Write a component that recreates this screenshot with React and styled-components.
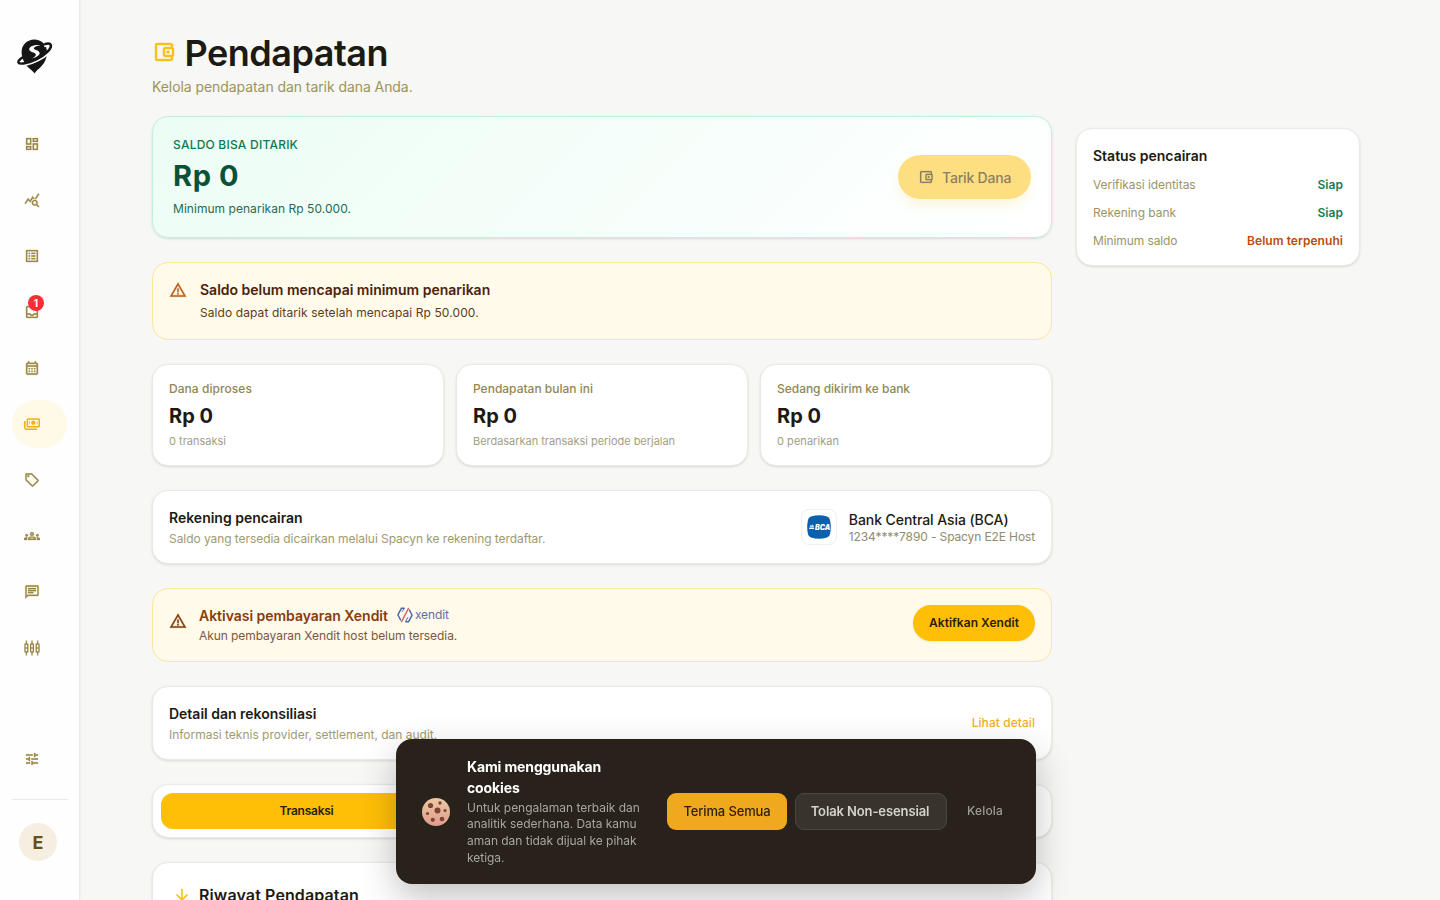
import React from "react";
import styled, { createGlobalStyle, css } from "styled-components";
import {
  MdOutlineDashboard,
  MdQueryStats,
  MdOutlineListAlt,
  MdOutlineInbox,
  MdOutlineCalendarMonth,
  MdOutlineSell,
  MdOutlineGroups,
  MdOutlineChat,
  MdTune,
  MdOutlineAccountBalanceWallet,
  MdWarningAmber,
  MdArrowDownward,
} from "react-icons/md";

const GlobalStyle = createGlobalStyle`
  *, *::before, *::after { box-sizing: border-box; }
  body {
    margin: 0;
    height: 900px;
    overflow: hidden;
    background: #f7f7f5;
    color: #1c1a12;
    font-family: Inter, "Open Sans", sans-serif;
  }
  h1, h2, h3, p { margin: 0; }
  button { font-family: inherit; border: 0; padding: 0; }
  /* Material icons carry an invisible 24px bounds shape that must not be stroked */
  svg path[fill="none"][d^="M0 0h24"],
  svg path[fill="none"][d^="M0,0h24"],
  svg rect[fill="none"][height="24"] { stroke: none; }
`;

const Shell = styled.div`
  display: flex;
  height: 900px;
  overflow: hidden;
`;

/* Sidebar */
const Sidebar = styled.aside`
  flex: none;
  display: flex;
  flex-direction: column;
  width: 80px;
  height: 900px;
  padding: 38px 12px 0;
  background: #fefefe;
  border-right: 1px solid #ebebe9;
  box-shadow: 1px 0 3px rgba(0, 0, 0, 0.04);
`;
const Brand = styled.a`
  display: flex;
  margin: 0 0 45px 5px;
`;
const Nav = styled.nav`
  display: flex;
  flex-direction: column;
  gap: 8px;
`;
const NavItem = styled.a`
  position: relative;
  display: flex;
  align-items: center;
  width: 55px;
  height: 48px;
  padding-left: 12px;
  border-radius: 24px;
  color: #9a8746;
  svg { stroke-width: 0.4; }
  ${(p) =>
    p.$active &&
    css`
      background: #fff9e8;
      color: #eeb20c;
    `}
`;
const Badge = styled.span`
  position: absolute;
  top: 7px;
  left: 16px;
  width: 16px;
  height: 16px;
  border-radius: 50%;
  background: #fb2c36;
  color: #fff;
  font-size: 10px;
  line-height: 16px;
  font-weight: 700;
  text-align: center;
`;
const SidebarFoot = styled.div`
  display: flex;
  flex-direction: column;
  margin-top: 63px;
`;
const Divider = styled.hr`
  width: 56px;
  height: 1px;
  margin: 16px 0 23px;
  border: 0;
  background: #e9e9e7;
`;
const Avatar = styled.div`
  width: 38px;
  height: 38px;
  margin-left: 7px;
  border-radius: 50%;
  background: #f7eee2;
  color: #67501a;
  font-size: 18px;
  font-weight: 700;
  line-height: 40px;
  text-align: center;
`;

/* Page */
const Main = styled.main`
  display: flex;
  align-items: flex-start;
  gap: 24px;
  padding: 33px 0 0 72px;
`;
const Column = styled.div`
  width: 900px;
  display: flex;
  flex-direction: column;
  gap: 24px;
`;
const PageHeader = styled.header`
  margin-bottom: -5px;
`;
const TitleRow = styled.div`
  display: flex;
  align-items: center;
  gap: 9px;
  height: 40px;
  svg {
    margin: -2px 0 0 -0.5px;
    color: #fbbf1c;
    stroke-width: 0.4;
    stroke-linejoin: round;
  }
`;
const PageTitle = styled.h1`
  font-size: 36px;
  line-height: 40px;
  font-weight: 600;
  letter-spacing: -0.5px;
`;
const Subtitle = styled.p`
  margin-top: 4px;
  font-size: 14px;
  line-height: 20px;
  letter-spacing: -0.07px;
  color: #9b945c;
`;

const Card = styled.section`
  border: 1px solid #e9e9e6;
  border-radius: 16px;
  background: #fff;
  box-shadow: 0 1px 3px rgba(0, 0, 0, 0.1), 0 1px 2px -1px rgba(0, 0, 0, 0.08);
  padding: 16px;
`;
const BalanceCard = styled(Card)`
  display: flex;
  align-items: center;
  justify-content: space-between;
  height: 122px;
  padding: 20px;
  border-color: #c3f0dc;
  background: linear-gradient(135deg, #ecfdf5 0%, #ffffff 100%);
`;
const BalanceLabel = styled.p`
  font-size: 12px;
  line-height: 16px;
  font-weight: 500;
  letter-spacing: 0.22px;
  color: #0c7a4f;
`;
const BalanceValue = styled.p`
  margin: 3px 0 5px;
  font-size: 29px;
  line-height: 40px;
  font-weight: 700;
  letter-spacing: 0.6px;
  color: #0a5138;
`;
const BalanceNote = styled.p`
  font-size: 12px;
  line-height: 16px;
  letter-spacing: 0.04px;
  color: #256b52;
`;
const WithdrawButton = styled.button`
  display: flex;
  align-items: center;
  gap: 8px;
  width: 133px;
  height: 44px;
  padding-left: 20px;
  border-radius: 22px;
  background: #fddf81;
  color: #8d8060;
  font-size: 14px;
  font-weight: 500;
  letter-spacing: -0.2px;
  box-shadow: 0 8px 14px -4px rgba(251, 191, 36, 0.2);
  svg { stroke-width: 0.3; }
`;

const Notice = styled.section`
  display: flex;
  align-items: ${(p) => (p.$centered ? "center" : "flex-start")};
  gap: ${(p) => (p.$centered ? "12px" : "13px")};
  height: ${(p) => (p.$centered ? "74px" : "78px")};
  padding: ${(p) => (p.$centered ? "16px" : "17px 16px 0")};
  border: 1px solid #f9e79a;
  border-radius: 16px;
  background: #fffaea;
`;
const NoticeIcon = styled.span`
  display: flex;
  margin-top: ${(p) => p.$top || 0}px;
  color: ${(p) => p.$color};
  svg { stroke-width: 0.3; }
`;
const NoticeTitle = styled.h2`
  font-size: 14px;
  line-height: 20px;
  font-weight: 600;
  letter-spacing: ${(p) => p.$ls || 0}px;
  color: ${(p) => p.$color};
`;
const NoticeText = styled.p`
  margin-top: ${(p) => p.$top || 0}px;
  font-size: 12px;
  line-height: 16px;
  letter-spacing: ${(p) => p.$ls || 0}px;
  color: ${(p) => p.$color};
`;

const Stats = styled.div`
  display: grid;
  grid-template-columns: repeat(3, 1fr);
  gap: 12px;
`;
const StatCard = styled(Card)`
  height: 102px;
`;
const StatLabel = styled.p`
  font-size: 12px;
  line-height: 16px;
  font-weight: 500;
  letter-spacing: ${(p) => p.$ls}px;
  color: #908752;
`;
const StatValue = styled.p`
  margin: 5px 0 3px;
  font-size: 20px;
  line-height: 28px;
  font-weight: 700;
`;
const StatNote = styled.p`
  font-size: 11px;
  line-height: 16px;
  letter-spacing: ${(p) => p.$ls}px;
  color: #a29e84;
`;

const RowCard = styled(Card)`
  display: flex;
  align-items: center;
  justify-content: space-between;
  height: 74px;
`;
const CardTitle = styled.h2`
  font-size: 14px;
  line-height: 20px;
  font-weight: 600;
  letter-spacing: -0.01px;
`;
const CardText = styled.p`
  margin: 3px 0 -1px;
  font-size: 12px;
  line-height: 16px;
  letter-spacing: ${(p) => p.$ls}px;
  color: #a09a70;
`;
const Bank = styled.div`
  display: flex;
  align-items: center;
  gap: 12px;
`;
const BankLogo = styled.div`
  display: flex;
  align-items: center;
  justify-content: center;
  width: 36px;
  height: 36px;
  border: 1px solid #f0f0ee;
  border-radius: 8px;
`;
const BankDetails = styled.div`
  padding-top: 2px;
`;
const BankName = styled.p`
  font-size: 14px;
  line-height: 18px;
  font-weight: 500;
  letter-spacing: -0.08px;
`;
const BankAccount = styled.p`
  font-size: 12px;
  line-height: 16px;
  letter-spacing: -0.12px;
  color: #908c6c;
`;
const XenditTitle = styled.div`
  display: flex;
  align-items: center;
  gap: 9px;
`;
const XenditBrand = styled.span`
  display: flex;
  align-items: center;
  gap: 2px;
  margin-top: -2px;
  font-size: 12px;
  line-height: 16px;
  letter-spacing: -0.08px;
  color: #5b6fa8;
`;
const NoticeBody = styled.div`
  flex: 1;
`;
const ActivateButton = styled.button`
  width: 122px;
  height: 36px;
  margin-top: -4px;
  padding-bottom: 1px;
  border-radius: 18px;
  background: #ffbf07;
  color: #2c1e04;
  font-size: 12px;
  font-weight: 600;
  letter-spacing: 0.05px;
  box-shadow: 0 1px 2px rgba(0, 0, 0, 0.08);
`;
const DetailLink = styled.a`
  margin-top: -2px;
  font-size: 12px;
  font-weight: 500;
  letter-spacing: 0.06px;
  color: #f2b01b;
`;

const Tabs = styled(Card)`
  display: grid;
  grid-template-columns: repeat(3, 1fr);
  height: 54px;
  padding: 8px;
`;
const Tab = styled.button`
  height: 36px;
  padding: 0 3px 2px 0;
  border-radius: 12px;
  background: #ffbf07;
  color: #2c1e04;
  font-size: 12px;
  font-weight: 600;
  letter-spacing: -0.24px;
`;
const HistoryCard = styled(Card)`
  display: flex;
  align-items: flex-start;
  gap: 8px;
  height: 140px;
  padding: 20px 20px;
  svg { color: #fbbf1c; margin-top: 3px; stroke-width: 0.3; }
`;
const HistoryTitle = styled.h2`
  font-size: 16px;
  line-height: 24px;
  font-weight: 600;
  letter-spacing: 0.12px;
`;

/* Status panel */
const StatusCard = styled(Card)`
  width: 284px;
  height: 138px;
  margin-top: 95px;
  padding-top: 17px;
`;
const StatusRow = styled.div`
  display: flex;
  justify-content: space-between;
  margin-top: ${(p) => (p.$first ? 11 : 12)}px;
  font-size: 12px;
  line-height: 16px;
`;
const StatusLabel = styled.span`
  letter-spacing: ${(p) => p.$ls}px;
  color: #9c9562;
`;
const StatusValue = styled.span`
  font-weight: 600;
  letter-spacing: 0.05px;
  color: ${(p) => (p.$ok ? "#0f8058" : "#bb4d0a")};
`;

/* Cookie banner */
const CookieBanner = styled.div`
  position: fixed;
  left: 396px;
  bottom: 16px;
  display: flex;
  align-items: center;
  width: 640px;
  height: 145px;
  padding: 0 16px 0 26px;
  border-radius: 16px;
  background: #28221a;
  box-shadow: 0 14px 36px rgba(0, 0, 0, 0.24);
`;
const CookieCopy = styled.div`
  width: 183px;
  margin: 0 17px;
`;
const CookieTitle = styled.h3`
  margin: -1px 0 2px;
  color: #fff;
  font-size: 14px;
  line-height: 21px;
  font-weight: 700;
  letter-spacing: -0.13px;
`;
const CookieText = styled.p`
  color: #a9a59e;
  font-size: 12px;
  line-height: 16.6px;
  letter-spacing: -0.03px;
`;
const CookieButton = styled.button`
  width: ${(p) => p.$width}px;
  height: 37px;
  margin-right: 8px;
  padding-bottom: 2px;
  border-radius: 9px;
  font-size: 13px;
  font-weight: 500;
  letter-spacing: -0.14px;
  background: #f0a81f;
  color: #2b1f06;
  ${(p) =>
    p.$secondary &&
    css`
      padding-right: 2px;
      border: 1px solid #4b463e;
      background: #38332b;
      color: #d6d3cd;
      font-weight: 600;
      letter-spacing: -0.11px;
    `}
`;
const CookieManage = styled.button`
  width: 60px;
  padding-bottom: 2px;
  background: none;
  color: #a09c95;
  font-size: 12px;
  font-weight: 500;
  letter-spacing: 0.15px;
`;

function BrandMark() {
  return (
    <svg width="36" height="37" viewBox="0 0 36 37">
      <path
        d="M17.6 35.500 C15.8 32.500 10 29.500 7.600 25 C5.400 21 4.600 17.500 4.600 13.800 A12.700 12.400 0 0 1 30 13.800 C30 18 29 21.500 27 25 C24 29.500 19.500 32 17.600 35.500Z"
        fill="#151515"
      />
      <path
        d="M5.500 22.500 C3 25.500 3.500 27.300 8.500 26.500 C15.500 25.300 26 20.300 31.300 14.900"
        fill="none"
        stroke="#fefefe"
        strokeWidth="2.800"
      />
      <path d="M27.200 8.300 C31 7.200 32 8.600 30.200 11.500" fill="none" stroke="#fefefe" strokeWidth="1.800" />
      <path
        d="M5 19.700 C-.6 23.800 .4 26.500 7.700 25.300 C14.700 24 25.200 19.200 30.600 13.600 C35.800 8.200 34.800 4.400 28.300 6"
        fill="none"
        stroke="#151515"
        strokeWidth="2.500"
        strokeLinecap="round"
      />
      <path
        d="M23.500 7.300 C18 6.500 12.400 8.200 12.200 11.200 C12.200 14.400 18.400 14 18.800 16.400 C19 18 16.800 19.400 14.600 20.600 C19.800 19.400 23 17.200 22.600 14.800 C22 11.800 17 12 16.800 10.400 C16.800 9 19.600 8 23.500 7.300Z"
        fill="#fefefe"
      />
    </svg>
  );
}

function PaymentsIcon() {
  return (
    <svg width="16" height="16" viewBox="0 0 16 16" fill="none" stroke="currentColor">
      <rect x="3.300" y="2.900" width="12" height="7.800" rx="1" strokeWidth="1.500" />
      <path d="M.8 5v6.800q0 1.400 1.400 1.400H13" strokeWidth="1.500" />
      <circle cx="9.300" cy="6.800" r="2" fill="currentColor" />
      <path d="M5.300 5.200v3.200M13.300 5.200v3.200" strokeWidth=".8" />
    </svg>
  );
}

function SlidersIcon() {
  return (
    <svg width="16" height="16" viewBox="0 0 16 16" fill="none" stroke="currentColor">
      {[2.4, 8, 13.6].map((x) => (
        <g key={x} strokeWidth="1.350">
          <path d={`M${x} .6V4M${x} 12v3.400`} />
          <rect x={x - 1.4} y="4" width="2.800" height="8" rx=".5" />
          <path d={`M${x - 1.4} 8h2.800`} />
        </g>
      ))}
    </svg>
  );
}

function BcaLogo() {
  return (
    <svg width="24" height="24" viewBox="0 0 24 24">
      <path d="M4 1.500Q12-1 20 1.500Q22.600 2 23 5Q24.600 12 23 19Q22.600 22 20 22.600Q12 25 4 22.600Q1.400 22 1 19Q-.6 12 1 5Q1.400 2 4 1.500Z" fill="#0b60ad" />
      <path d="M2 14h5.200l-.5-1.500H2.500zM2.700 11.800l.9-1.700.9.800.7-1.900.7 1.900.9-.5.2 1.400z" fill="#fff" />
      <text x="8" y="14.600" fill="#fff" fontSize="7" fontWeight="900" fontStyle="italic" textLength="15.200" lengthAdjust="spacingAndGlyphs" fontFamily="Inter, sans-serif">
        BCA
      </text>
    </svg>
  );
}

function XenditMark() {
  return (
    <svg width="16" height="16" viewBox="0 0 16 16" fill="none" strokeWidth="1.400">
      <path d="M7.600 1.300H4.400L.9 7.800l2.900 5.600" stroke="#4a66b0" />
      <path d="M8.400 14.700h3.200L15.100 8.200l-2.900-5.600" stroke="#4a66b0" />
      <path d="M11.700.9 4.300 15.100" stroke="#e0626a" />
      <path d="M5 4.700 7.200 1.600M8.600 14.400l2.500-4.200" stroke="#4a66b0" strokeWidth="1" />
    </svg>
  );
}

function CookieIcon() {
  const chips = [[8.5, 7.5, 2.6], [18, 5, 1.7], [15.5, 12.5, 3], [23, 12.5, 1.6], [5.5, 15.5, 1.6], [10.8, 21.8, 2.1], [20, 21, 2.3]];
  return (
    <svg width="28" height="28" viewBox="0 0 28 28">
      <defs>
        <linearGradient id="cookie" x1="0" y1="0" x2="0" y2="1">
          <stop offset="0" stopColor="#eccaa2" />
          <stop offset="1" stopColor="#e19a8c" />
        </linearGradient>
      </defs>
      <circle cx="14" cy="14" r="14" fill="url(#cookie)" />
      {chips.map(([x, y, r]) => (
        <circle key={`${x}-${y}`} cx={x} cy={y} r={r} fill="#7c4438" />
      ))}
    </svg>
  );
}

const navIcons = [
  MdOutlineDashboard,
  MdQueryStats,
  MdOutlineListAlt,
  MdOutlineInbox,
  MdOutlineCalendarMonth,
  PaymentsIcon,
  MdOutlineSell,
  MdOutlineGroups,
  MdOutlineChat,
  SlidersIcon,
];

const stats = [
  { label: "Dana diproses", labelLs: 0.06, note: "0 transaksi", noteLs: 0.01 },
  { label: "Pendapatan bulan ini", labelLs: 0, note: "Berdasarkan transaksi periode berjalan", noteLs: -0.03 },
  { label: "Sedang dikirim ke bank", labelLs: -0.03, note: "0 penarikan", noteLs: 0.04 },
];

const statuses = [
  { label: "Verifikasi identitas", ls: -0.06, value: "Siap", ok: true },
  { label: "Rekening bank", ls: -0.04, value: "Siap", ok: true },
  { label: "Minimum saldo", ls: -0.1, value: "Belum terpenuhi", ok: false },
];

export default function App() {
  return (
    <>
      <GlobalStyle />
      <Shell>
        <Sidebar>
          <Brand><BrandMark /></Brand>
          <Nav>
            {navIcons.map((Icon, i) => (
              <NavItem key={i} $active={Icon === PaymentsIcon}>
                <Icon size={16} />
                {Icon === MdOutlineInbox && <Badge>1</Badge>}
              </NavItem>
            ))}
          </Nav>
          <SidebarFoot>
            <NavItem><MdTune size={16} /></NavItem>
            <Divider />
            <Avatar>E</Avatar>
          </SidebarFoot>
        </Sidebar>

        <Main>
          <Column>
            <PageHeader>
              <TitleRow>
                <MdOutlineAccountBalanceWallet size={24} />
                <PageTitle>Pendapatan</PageTitle>
              </TitleRow>
              <Subtitle>Kelola pendapatan dan tarik dana Anda.</Subtitle>
            </PageHeader>

            <BalanceCard>
              <div>
                <BalanceLabel>SALDO BISA DITARIK</BalanceLabel>
                <BalanceValue>Rp 0</BalanceValue>
                <BalanceNote>Minimum penarikan Rp 50.000.</BalanceNote>
              </div>
              <WithdrawButton>
                <MdOutlineAccountBalanceWallet size={16} />
                Tarik Dana
              </WithdrawButton>
            </BalanceCard>

            <Notice>
              <NoticeIcon $color="#b8601c" $top={1}><MdWarningAmber size={18} /></NoticeIcon>
              <div>
                <NoticeTitle $color="#4a220a">Saldo belum mencapai minimum penarikan</NoticeTitle>
                <NoticeText $top={5} $ls={0.09} $color="#5e3a20">
                  Saldo dapat ditarik setelah mencapai Rp 50.000.
                </NoticeText>
              </div>
            </Notice>

            <Stats>
              {stats.map((s) => (
                <StatCard key={s.label}>
                  <StatLabel $ls={s.labelLs}>{s.label}</StatLabel>
                  <StatValue>Rp 0</StatValue>
                  <StatNote $ls={s.noteLs}>{s.note}</StatNote>
                </StatCard>
              ))}
            </Stats>

            <RowCard>
              <div>
                <CardTitle>Rekening pencairan</CardTitle>
                <CardText $ls={-0.06}>Saldo yang tersedia dicairkan melalui Spacyn ke rekening terdaftar.</CardText>
              </div>
              <Bank>
                <BankLogo><BcaLogo /></BankLogo>
                <BankDetails>
                  <BankName>Bank Central Asia (BCA)</BankName>
                  <BankAccount>1234****7890 - Spacyn E2E Host</BankAccount>
                </BankDetails>
              </Bank>
            </RowCard>

            <Notice $centered>
              <NoticeIcon $color="#84400f" $top={-8}><MdWarningAmber size={18} /></NoticeIcon>
              <NoticeBody>
                <XenditTitle>
                  <NoticeTitle $color="#873c0c" $ls={-0.03}>Aktivasi pembayaran Xendit</NoticeTitle>
                  <XenditBrand><XenditMark />xendit</XenditBrand>
                </XenditTitle>
                <NoticeText $top={2} $ls={-0.07} $color="#7c5838">
                  Akun pembayaran Xendit host belum tersedia.
                </NoticeText>
              </NoticeBody>
              <ActivateButton>Aktifkan Xendit</ActivateButton>
            </Notice>

            <RowCard>
              <div>
                <CardTitle>Detail dan rekonsiliasi</CardTitle>
                <CardText $ls={-0.01}>Informasi teknis provider, settlement, dan audit.</CardText>
              </div>
              <DetailLink>Lihat detail</DetailLink>
            </RowCard>

            <Tabs><Tab>Transaksi</Tab></Tabs>

            <HistoryCard>
              <MdArrowDownward size={18} />
              <HistoryTitle>Riwayat Pendapatan</HistoryTitle>
            </HistoryCard>
          </Column>

          <StatusCard>
            <CardTitle>Status pencairan</CardTitle>
            {statuses.map((s, i) => (
              <StatusRow key={s.label} $first={i === 0}>
                <StatusLabel $ls={s.ls}>{s.label}</StatusLabel>
                <StatusValue $ok={s.ok}>{s.value}</StatusValue>
              </StatusRow>
            ))}
          </StatusCard>
        </Main>
      </Shell>

      <CookieBanner>
        <CookieIcon />
        <CookieCopy>
          <CookieTitle>Kami menggunakan<br />cookies</CookieTitle>
          <CookieText>
            Untuk pengalaman terbaik dan<br />analitik sederhana. Data kamu<br />aman dan tidak dijual ke pihak<br />ketiga.
          </CookieText>
        </CookieCopy>
        <CookieButton $width={120}>Terima Semua</CookieButton>
        <CookieButton $width={152} $secondary>Tolak Non-esensial</CookieButton>
        <CookieManage>Kelola</CookieManage>
      </CookieBanner>
    </>
  );
}
